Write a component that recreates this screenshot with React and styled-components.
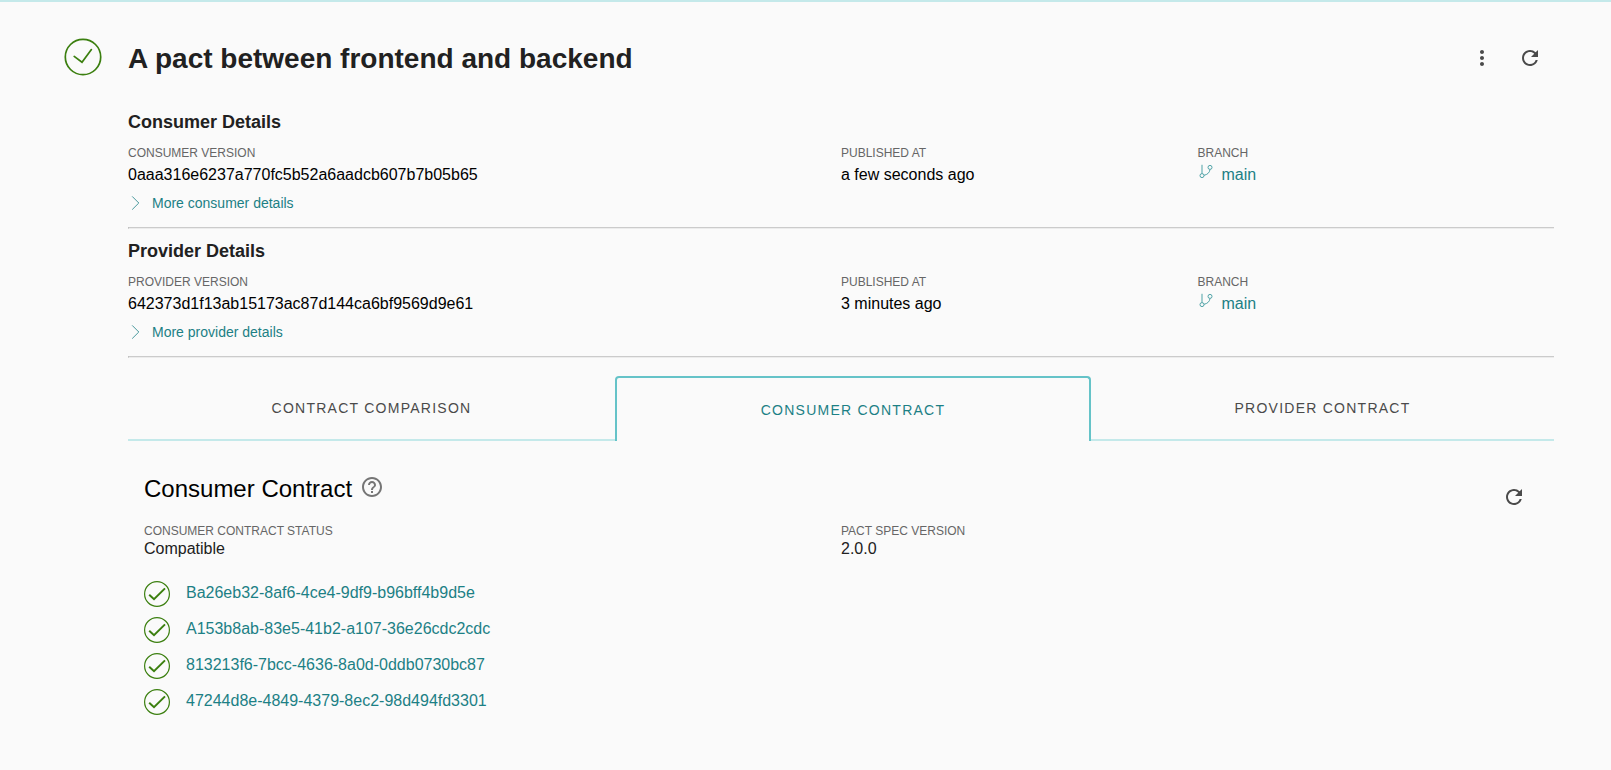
import React from 'react'
import styled, { createGlobalStyle } from 'styled-components'
import { MdHelpOutline, MdMoreVert, MdRefresh } from 'react-icons/md'

const GlobalStyle = createGlobalStyle`
* {
  box-sizing: border-box;
}
body {
  margin: 0;
  background-color: #fafafa;
  font-family: "Liberation Sans", Helvetica, Arial, sans-serif;
  color: #000;
}
`;

const Page = styled.div`
min-height: 100vh;
border-top: 2px solid #c4e9ea;
padding: 36px 57px 0 64px;
display: flex;
align-items: flex-start;
`;

const Status = styled.div`
flex: 0 0 64px;
height: 38px;
svg {
  display: block;
}
`;

const Content = styled.main`
flex: 1;
min-width: 0;
`;

const Header = styled.header`
display: flex;
justify-content: space-between;
align-items: center;
height: 40px;
padding-right: 12px;
margin-bottom: 32px;
`;

const Title = styled.h1`
margin: 0;
padding-top: 2px;
font-size: 28px;
line-height: 40px;
color: #212121;
white-space: nowrap;
`;

const Actions = styled.div`
display: flex;
gap: 24px;
`;

const IconButton = styled.button`
display: flex;
padding: 0;
border: none;
background: none;
color: #4a4a4a;
font-size: 24px;
cursor: pointer;
`;

const Details = styled.section`
height: 117px;
`;

const Divider = styled.hr`
height: 2px;
margin: 0 0 10px;
border: solid;
border-width: 1px 0 1px 1px;
border-color: #cbcbcb #ececec #ececec #b5b5b5;
`;

const DetailsTitle = styled.h2`
margin: 0 0 11px;
font-size: 18px;
line-height: 24px;
color: #212121;
`;

const Columns = styled.div`
display: grid;
grid-template-columns: 2fr 1fr 1fr;
`;

const Label = styled.div`
font-size: 12px;
line-height: 16px;
color: #666;
text-transform: uppercase;
`;

const Value = styled.div`
display: flex;
margin-top: 2px;
font-size: 16px;
line-height: 24px;
`;

const Branch = styled.a`
display: flex;
gap: 8px;
color: #1c8085;
svg {
  margin: 1px 0 0 1px;
}
`;

const More = styled.a`
display: flex;
align-items: center;
gap: 10px;
margin: 6px 0 0 3px;
font-size: 14px;
line-height: 20px;
color: #1c8085;
cursor: pointer;
`;

const Tabs = styled.div`
display: grid;
grid-template-columns: 487fr 476fr 463fr;
height: 65px;
margin-top: 18px;
`;

const Tab = styled.button`
padding: 0;
background: none;
font-family: inherit;
font-size: 14px;
line-height: 20px;
letter-spacing: 1.25px;
text-transform: uppercase;
cursor: pointer;
color: ${({ $active }) => ($active ? '#1c8085' : '#4a4a4a')};
border: ${({ $active }) => ($active ? '2px solid #65c3c8' : 'none')};
border-bottom: ${({ $active }) => ($active ? 'none' : '2px solid #c4e9ea')};
border-radius: ${({ $active }) => ($active ? '4px 4px 0 0' : '0')};
`;

const Panel = styled.section`
padding: 32px 0 0 16px;
`;

const PanelHeader = styled.div`
display: flex;
justify-content: space-between;
align-items: flex-start;
height: 50px;
padding-right: 28px;
${IconButton} {
  margin-top: 12px;
}
`;

const PanelTitle = styled.h3`
display: flex;
gap: 8px;
margin: 0;
font-size: 24px;
font-weight: 400;
line-height: 32px;
svg {
  margin-top: 2px;
  color: #757575;
}
`;

const Summary = styled.div`
display: grid;
grid-template-columns: 697px 1fr;
`;

const SummaryValue = styled.div`
font-size: 16px;
line-height: 20px;
color: #212121;
`;

const List = styled.ul`
list-style: none;
margin: 22px 0 0;
padding: 0;
`;

const Item = styled.li`
display: flex;
gap: 16px;
height: 36px;
font-size: 16px;
line-height: 24px;
color: #1c8085;
svg {
  flex: none;
}
`;

const SuccessIcon = () => (
  <svg width="38" height="38" viewBox="0 0 38 38" fill="none" stroke="#3b7f0f" strokeWidth="1.7">
    <circle cx="19" cy="19" r="17.7" />
    <path d="M10.2 18.4l7.8 5.8 9.4-12.6" strokeLinecap="round" />
  </svg>
)

const CheckIcon = () => (
  <svg width="26" height="26" viewBox="0 0 26 26" fill="none" stroke="#3b7f0f">
    <circle cx="13" cy="13" r="12.4" strokeWidth="1.2" />
    <path d="M5.2 13.8l4.8 4.4L21 7.4" strokeWidth="2" />
  </svg>
)

const ChevronIcon = () => (
  <svg width="11" height="14" viewBox="0 0 11 14" fill="none" stroke="#1c8085" strokeWidth="0.8">
    <path d="M1.2 0.4l6.6 6.6-6.6 6.6" />
  </svg>
)

const BranchIcon = () => (
  <svg width="15" height="15" viewBox="0 0 15 15" fill="none" stroke="#4fa3a7">
    <path d="M3 0.8v8.7M5 11.3C8.3 10.6 10.6 8.8 11 5.5" />
    <circle cx="3" cy="11.6" r="2" />
    <circle cx="11" cy="3.4" r="2" />
  </svg>
)

const contracts = [
  'Ba26eb32-8af6-4ce4-9df9-b96bff4b9d5e',
  'A153b8ab-83e5-41b2-a107-36e26cdc2cdc',
  '813213f6-7bcc-4636-8a0d-0ddb0730bc87',
  '47244d8e-4849-4379-8ec2-98d494fd3301',
]

const Participant = ({ name, version, published }) => {
  return (
    <>
      <Details>
        <DetailsTitle>{name} Details</DetailsTitle>
        <Columns>
          <div>
            <Label>{name} version</Label>
            <Value>{version}</Value>
          </div>
          <div>
            <Label>Published at</Label>
            <Value>{published}</Value>
          </div>
          <div>
            <Label>Branch</Label>
            <Value><Branch><BranchIcon />main</Branch></Value>
          </div>
        </Columns>
        <More><ChevronIcon />More {name.toLowerCase()} details</More>
      </Details>
      <Divider />
    </>
  )
}

const App = () => {
  return (
    <>
      <GlobalStyle />
      <Page>
        <Status><SuccessIcon /></Status>
        <Content>
          <Header>
            <Title>A pact between frontend and backend</Title>
            <Actions>
              <IconButton aria-label="More"><MdMoreVert /></IconButton>
              <IconButton aria-label="Refresh"><MdRefresh /></IconButton>
            </Actions>
          </Header>
          <Participant name="Consumer" version="0aaa316e6237a770fc5b52a6aadcb607b7b05b65" published="a few seconds ago" />
          <Participant name="Provider" version="642373d1f13ab15173ac87d144ca6bf9569d9e61" published="3 minutes ago" />
          <Tabs>
            <Tab>Contract comparison</Tab>
            <Tab $active>Consumer contract</Tab>
            <Tab>Provider contract</Tab>
          </Tabs>
          <Panel>
            <PanelHeader>
              <PanelTitle>Consumer Contract<MdHelpOutline /></PanelTitle>
              <IconButton aria-label="Refresh contract"><MdRefresh /></IconButton>
            </PanelHeader>
            <Summary>
              <div>
                <Label>Consumer contract status</Label>
                <SummaryValue>Compatible</SummaryValue>
              </div>
              <div>
                <Label>Pact spec version</Label>
                <SummaryValue>2.0.0</SummaryValue>
              </div>
            </Summary>
            <List>
              {contracts.map((id) => (
                <Item key={id}><CheckIcon />{id}</Item>
              ))}
            </List>
          </Panel>
        </Content>
      </Page>
    </>
  )
}

export default App
